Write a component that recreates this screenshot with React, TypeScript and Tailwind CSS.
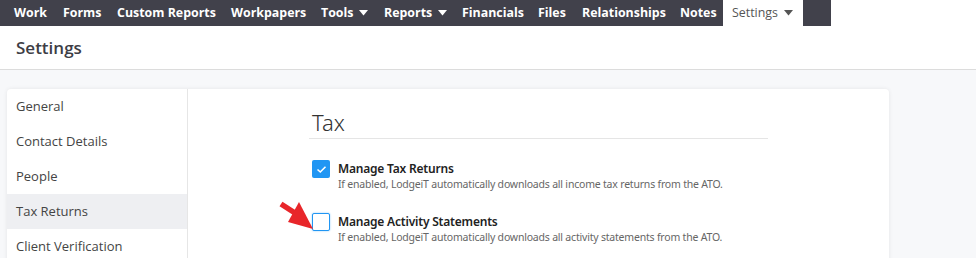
import React from "react";

const navItems = [
  { label: "Work", w: "w-[49px]" },
  { label: "Forms", w: "w-[54px]" },
  { label: "Custom Reports", w: "w-[114px]" },
  { label: "Workpapers", w: "w-[90px]" },
  { label: "Tools", w: "w-[63px]", caret: true },
  { label: "Reports", w: "w-[78px]", caret: true },
  { label: "Financials", w: "w-[76px]" },
  { label: "Files", w: "w-[44px]" },
  { label: "Relationships", w: "w-[98px]" },
  { label: "Notes", w: "w-[51px]" },
];

const Caret = ({ color = "white" }: { color?: string }) => (
  <svg width="9" height="6" viewBox="0 0 9 6" className="ml-[6px] shrink-0">
    <path d="M0 0 L9 0 L4.5 5.5 Z" fill={color} />
  </svg>
);

const sideItems = ["General", "Contact Details", "People", "Tax Returns", "Client Verification"];

export default function App() {
  return (
    <div className="w-[976px] h-[258px] overflow-hidden bg-[#f7f8fa] relative" style={{ fontFamily: '"Open Sans", sans-serif' }}>
      {/* top nav */}
      <div className="flex h-[26px] bg-white">
        <div className="flex h-full bg-[#41414b] pl-[6px] pr-[28px] items-stretch">
          {navItems.map((n) => (
            <div key={n.label} className={`flex items-center pl-[8px] whitespace-nowrap text-white font-bold text-[12.4px] ${n.w}`}>
              {n.label}
              {n.caret && <Caret />}
            </div>
          ))}
          <div className="flex items-center bg-white text-[#555] text-[12.4px] pl-[9px] w-[80px]">
            Settings
            <Caret color="#555" />
          </div>
        </div>
      </div>
      {/* header */}
      <div className="h-[44px] bg-white border-b border-[#dcdcdc] flex items-center pl-[16px]">
        <span className="text-[17px] font-semibold text-[#3d3d45]">Settings</span>
      </div>
      {/* body */}
      <div className="pl-[7px] pt-[19px]">
        <div className="w-[882px] h-[200px] bg-white rounded-[4px] shadow-[0_0_4px_rgba(0,0,0,0.08)] flex">
          <div className="w-[181px] border-r border-[#e6e6e6] flex flex-col">
            {sideItems.map((s) => (
              <div
                key={s}
                className={`h-[35px] flex items-center pl-[9px] text-[13px] text-[#444] ${s === "Tax Returns" ? "bg-[#eeeff2]" : ""}`}
              >
                {s}
              </div>
            ))}
          </div>
          <div className="flex-1 flex justify-center">
            <div className="w-[459px] pt-[17px]" style={{ fontFamily: '"Noto Sans", sans-serif' }}>
              <div className="pl-[3px] text-[22px] leading-[32px] text-[#333] font-light">Tax</div>
              <div className="border-b border-[#e5e5e5]" />
              <div className="mt-[21px] pl-[3px] flex flex-col gap-[21px]">
                <div className="flex">
                  <div className="w-[18px] h-[18px] rounded-[2px] bg-[#2196f3] flex items-center justify-center shrink-0">
                    <svg width="11" height="9" viewBox="0 0 11 9">
                      <path d="M1.5 4.5 L4.3 7 L9.5 1.8" stroke="white" strokeWidth="1.6" fill="none" />
                    </svg>
                  </div>
                  <div className="ml-[8px] mt-[1px]">
                    <div className="text-[12px] tracking-[-0.2px] leading-[16px] font-semibold text-[#222]">Manage Tax Returns</div>
                    <div className="text-[10.5px] tracking-[-0.2px] leading-[15px] text-[#666]">If enabled, LodgeiT automatically downloads all income tax returns from the ATO.</div>
                  </div>
                </div>
                <div className="flex">
                  <div className="w-[18px] h-[18px] rounded-[2px] border-[1.5px] border-[#2196f3] bg-white shrink-0 shadow-[0_0_2px_#8cc8f8]" />
                  <div className="ml-[8px] mt-[1px]">
                    <div className="text-[12px] tracking-[-0.2px] leading-[16px] font-semibold text-[#222]">Manage Activity Statements</div>
                    <div className="text-[10.5px] tracking-[-0.2px] leading-[15px] text-[#666]">If enabled, LodgeiT automatically downloads all activity statements from the ATO.</div>
                  </div>
                </div>
              </div>
            </div>
          </div>
        </div>
      </div>
      {/* red arrow annotation */}
      <svg className="absolute left-[278px] top-[199px]" width="40" height="34" viewBox="0 0 40 34">
        <path d="M3 5 L17 14" stroke="#e8262a" strokeWidth="5.5" strokeLinecap="butt" />
        <path d="M10 23 L21 3 L35 30 Z" fill="#e8262a" />
      </svg>
    </div>
  );
}
